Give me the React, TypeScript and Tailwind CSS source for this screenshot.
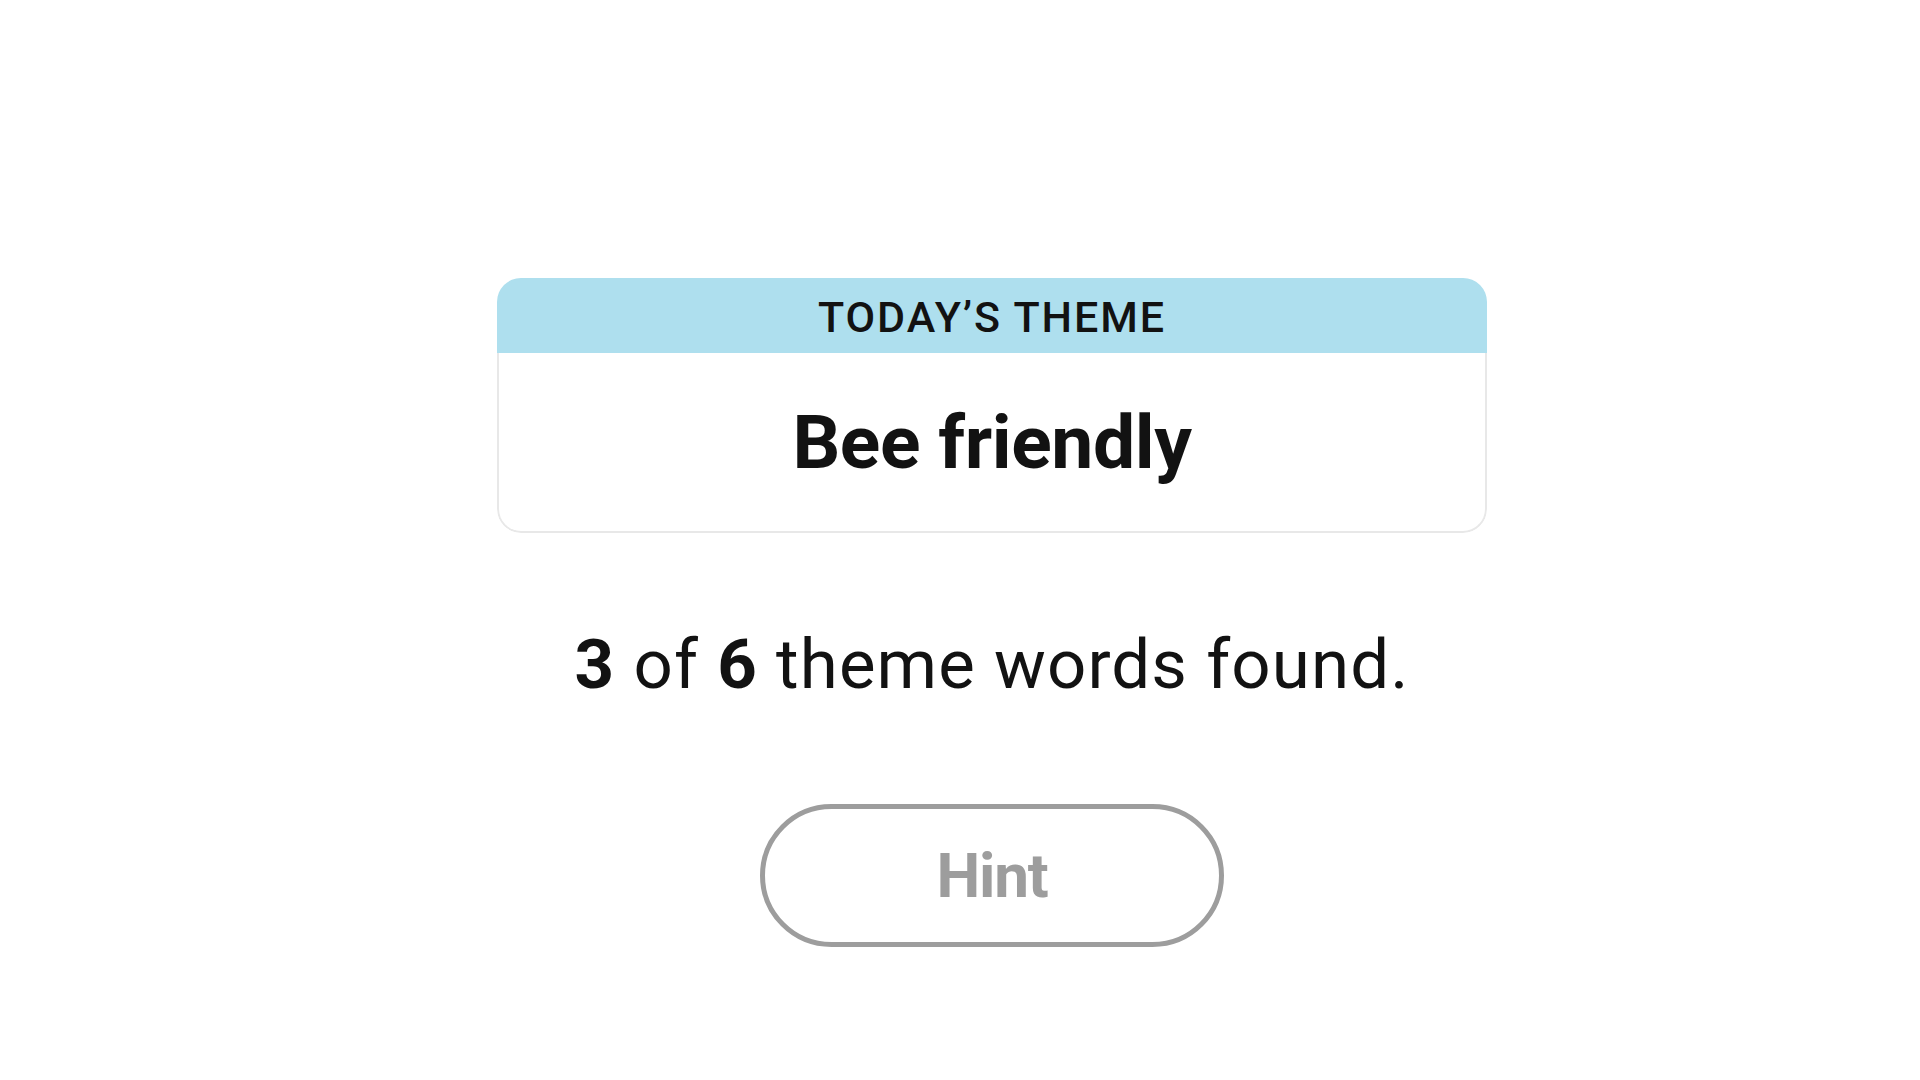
import React from "react";

export default function App() {
  return (
    <div className="min-h-screen w-full bg-white flex flex-col items-center pl-16 pt-[278px] font-['Roboto','Liberation_Sans',sans-serif] text-[#121212]">
      <div className="w-[990px] rounded-[24px] overflow-hidden">
        <div className="h-[75px] bg-[#aedfee] flex items-center justify-center pt-[4px]">
          <span className="text-[43px] leading-none font-medium tracking-[1.9px]">TODAY’S THEME</span>
        </div>
        <div className="h-[180px] border-2 border-t-0 border-[#e8e8e8] rounded-b-[24px] flex items-center justify-center">
          <span className="text-[75px] leading-none font-bold tracking-[-0.4px]">Bee friendly</span>
        </div>
      </div>
      <p className="mt-[97px] text-[69px] leading-none tracking-[1.1px]">
        <span className="font-bold">3</span> of <span className="font-bold">6</span> theme words found.
      </p>
      <button className="mt-[105px] w-[464px] h-[143px] border-[5px] border-[#9d9d9d] rounded-full flex items-center justify-center bg-white">
        <span className="text-[62px] leading-none font-bold text-[#9d9d9d] tracking-[-1.2px]">Hint</span>
      </button>
    </div>
  );
}
